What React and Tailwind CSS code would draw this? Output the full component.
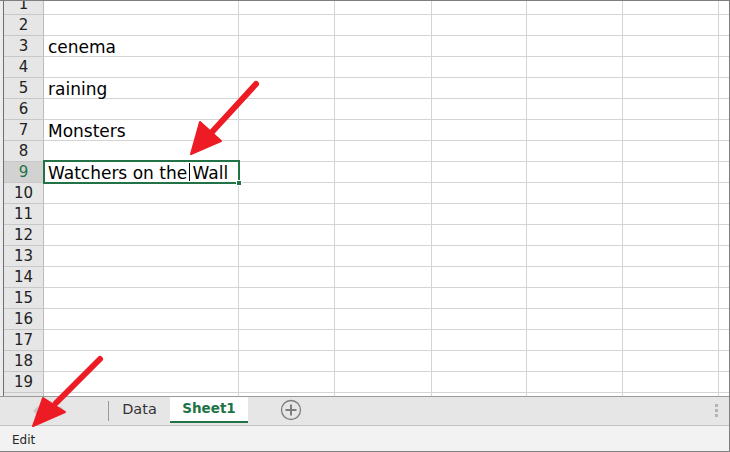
import React from 'react';

const COLS = [195, 96, 97, 95, 96, 96, 10];

const cells = {
  3: 'cenema',
  5: 'raining',
  7: 'Monsters',
};

const Row = ({ n }) => {
  const active = n === 9;
  return (
    <div className="flex h-[21px] shrink-0">
      <div
        className={`w-[40px] shrink-0 flex items-center justify-center border-r border-b border-r-[#bcbcbc] border-b-[#c8c8c8] text-[15px] leading-none ${
          active ? 'bg-[#d2d2d2] text-[#217346]' : 'bg-[#e6e6e6] text-[#222]'
        }`}
      >
        {n < 20 ? n : ''}
      </div>
      {COLS.map((w, i) => (
        <div
          key={i}
          style={{ width: w }}
          className={`shrink-0 border-b border-[#d4d4d4] relative ${i < 6 ? 'border-r' : ''}`}
        >
          {i === 0 && cells[n] && (
            <span className="absolute left-[4px] top-[1px] text-[17px] leading-[20px] text-black whitespace-nowrap">
              {cells[n]}
            </span>
          )}
          {i === 0 && active && (
            <>
              <span className="absolute left-[4px] top-[1px] text-[17px] leading-[20px] text-black whitespace-nowrap">
                Watchers on the Wall
              </span>
              <div className="absolute left-[145px] top-[1px] w-px h-[18px] bg-black" />
              <div className="absolute -left-[1px] -top-[2px] w-[197px] h-[24px] border-2 border-[#217346] z-10" />
              <div className="absolute left-[192px] top-[18px] w-[6px] h-[6px] bg-[#217346] border border-white z-20" />
            </>
          )}
        </div>
      ))}
    </div>
  );
};

const Arrow = ({ x1, y1, x2, y2, tip, w1, w2 }) => (
  <>
    <line x1={x1} y1={y1} x2={x2} y2={y2} stroke="#ed1c24" strokeWidth="6" strokeLinecap="round" />
    <polygon
      points={`${tip[0]},${tip[1]} ${w1[0]},${w1[1]} ${w2[0]},${w2[1]}`}
      fill="#ed1c24"
      stroke="#ed1c24"
      strokeWidth="2"
      strokeLinejoin="round"
    />
  </>
);

export default function App() {
  const rows = Array.from({ length: 20 }, (_, i) => i + 1);
  return (
    <div className="relative w-[730px] h-[452px] flex flex-col bg-white overflow-hidden font-['DejaVu_Sans',sans-serif] border-t border-r border-b border-[#7f7f7f]">
      {/* grid */}
      <div className="h-[395px] shrink-0 flex overflow-hidden">
        <div className="w-[3px] shrink-0 bg-[#ececec] border-r border-[#6f6f6f] box-content" />
        <div className="flex-1 flex flex-col -mt-[7px]">
          {rows.map((n) => (
            <Row key={n} n={n} />
          ))}
        </div>
      </div>

      {/* sheet tabs */}
      <div className="h-[30px] shrink-0 flex items-stretch bg-[#e6e6e6] border-t border-b border-t-[#9a9a9a] border-b-[#c4c4c4]">
        <div className="w-[108px] shrink-0 flex items-center pl-[33px] gap-[22px]">
          <div className="w-0 h-0 border-y-[5px] border-y-transparent border-r-[5px] border-r-[#c8c8c8]" />
          <div className="w-0 h-0 border-y-[5px] border-y-transparent border-l-[5px] border-l-[#c8c8c8]" />
        </div>
        <div className="w-px my-[4px] bg-[#9a9a9a]" />
        <div className="w-[61px] flex items-center justify-center text-[14.5px] text-[#333] pb-[3px]">Data</div>
        <div className="w-[78px] mb-[2px] bg-white border-b-2 border-[#217346] flex items-center justify-center text-[13.5px] font-bold text-[#217346] pb-[1px]">
          Sheet1
        </div>
        <div className="w-[86px] flex items-center justify-center pb-[3px]">
          <svg width="22" height="22" viewBox="0 0 22 22">
            <circle cx="11" cy="11" r="9.5" fill="none" stroke="#7d7d7d" strokeWidth="1.3" />
            <path d="M11 5.5v11M5.5 11h11" stroke="#7d7d7d" strokeWidth="2" />
          </svg>
        </div>
        <div className="flex-1 flex justify-end pr-[11px] items-center">
          <div className="flex flex-col gap-[2px] pb-[2px]">
            <div className="w-[3px] h-[3px] bg-[#b4b4b4]" />
            <div className="w-[3px] h-[3px] bg-[#b4b4b4]" />
            <div className="w-[3px] h-[3px] bg-[#b4b4b4]" />
          </div>
        </div>
      </div>

      {/* status bar */}
      <div className="flex-1 bg-[#f2f2f2] flex items-center pl-[12px] pt-[2px] text-[12px] text-[#262626]">
        Edit
      </div>

      <svg className="absolute left-0 top-0 pointer-events-none" width="730" height="452">
        <Arrow x1={256} y1={83} x2={212} y2={131} tip={[191, 153]} w1={[200, 121]} w2={[221, 140]} />
        <Arrow x1={100} y1={358} x2={56} y2={402} tip={[33, 425]} w1={[43, 397]} w2={[65, 411]} />
      </svg>
    </div>
  );
}
